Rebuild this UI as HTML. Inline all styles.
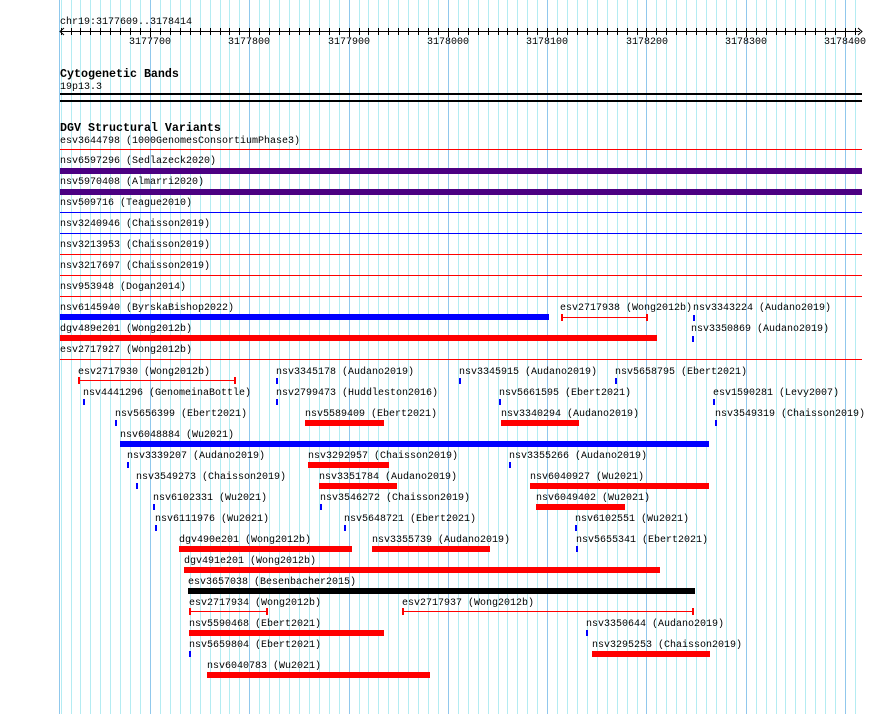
<!DOCTYPE html>
<html><head><meta charset="utf-8"><style>
body{margin:0;width:890px;height:714px;background:#fff;position:relative;overflow:hidden;font-family:"Liberation Mono",monospace;font-size:10px;color:#000}
.g{position:absolute;top:0;height:714px;width:1px;background:#b4ecf2}
.G{background:#90c8ec}
.t{position:absolute;white-space:pre;line-height:12px;height:12px;transform:translateY(2px)}
.b{position:absolute;font-weight:bold;font-size:11.67px;white-space:pre;line-height:14px;transform:translateY(1px)}
.h{position:absolute;left:60px;width:802px;height:1px}
.bar{position:absolute;height:6px}
.tk{position:absolute;width:2px;height:6px;background:#00f}
.rg{position:absolute;height:1px;background:#f00}
.rg:before,.rg:after{content:"";position:absolute;top:-3px;width:2px;height:7px;background:#f00}
.rg:before{left:0}.rg:after{right:0}
</style></head><body>
<div id="grid"></div>
<div class="t" style="left:60px;top:15px">chr19:3177609..3178414</div>
<div style="position:absolute;left:61px;top:31px;width:799px;height:1px;background:#000"></div>
<div id="ticks"></div>
<svg style="position:absolute;left:58px;top:27px" width="8" height="9"><path d="M6 1 L2 4.5 L6 8" stroke="#000" fill="none"/></svg>
<svg style="position:absolute;left:856px;top:27px" width="8" height="9"><path d="M2 1 L6 4.5 L2 8" stroke="#000" fill="none"/></svg>
<div class="t" style="left:129px;top:35px">3177700</div>
<div class="t" style="left:228px;top:35px">3177800</div>
<div class="t" style="left:328px;top:35px">3177900</div>
<div class="t" style="left:427px;top:35px">3178000</div>
<div class="t" style="left:526px;top:35px">3178100</div>
<div class="t" style="left:626px;top:35px">3178200</div>
<div class="t" style="left:725px;top:35px">3178300</div>
<div class="t" style="left:824px;top:35px">3178400</div>

<div class="b" style="left:60px;top:66px">Cytogenetic Bands</div>
<div class="t" style="left:60px;top:80px">19p13.3</div>
<div class="h" style="top:93px;background:#000;height:1.5px"></div>
<div class="h" style="top:100px;background:#000;height:1.5px"></div>

<div class="b" style="left:60px;top:120px">DGV Structural Variants</div>
<div class="t" style="left:60px;top:134px">esv3644798 (1000GenomesConsortiumPhase3)</div>
<div class="h" style="top:149px;background:#f00"></div>
<div class="t" style="left:60px;top:154px">nsv6597296 (Sedlazeck2020)</div>
<div class="bar" style="left:60px;top:168px;width:802px;background:#4b0082"></div>
<div class="t" style="left:60px;top:175px">nsv5970408 (Almarri2020)</div>
<div class="bar" style="left:60px;top:189px;width:802px;background:#4b0082"></div>
<div class="t" style="left:60px;top:196px">nsv509716 (Teague2010)</div>
<div class="h" style="top:212px;background:#00f"></div>
<div class="t" style="left:60px;top:217px">nsv3240946 (Chaisson2019)</div>
<div class="h" style="top:233px;background:#00f"></div>
<div class="t" style="left:60px;top:238px">nsv3213953 (Chaisson2019)</div>
<div class="h" style="top:254px;background:#f00"></div>
<div class="t" style="left:60px;top:259px">nsv3217697 (Chaisson2019)</div>
<div class="h" style="top:275px;background:#f00"></div>
<div class="t" style="left:60px;top:280px">nsv953948 (Dogan2014)</div>
<div class="h" style="top:296px;background:#f00"></div>
<div class="t" style="left:60px;top:301px">nsv6145940 (ByrskaBishop2022)</div>
<div class="bar" style="left:60px;top:314px;width:489px;background:#00f"></div>
<div class="t" style="left:560px;top:301px">esv2717938 (Wong2012b)</div>
<div class="rg" style="left:561px;top:317px;width:87px"></div>
<div class="t" style="left:693px;top:301px">nsv3343224 (Audano2019)</div>
<div class="tk" style="left:693px;top:315px"></div>
<div class="t" style="left:60px;top:322px">dgv489e201 (Wong2012b)</div>
<div class="bar" style="left:60px;top:335px;width:597px;background:#f00"></div>
<div class="t" style="left:691px;top:322px">nsv3350869 (Audano2019)</div>
<div class="tk" style="left:692px;top:336px"></div>
<div class="t" style="left:60px;top:343px">esv2717927 (Wong2012b)</div>
<div class="h" style="top:359px;background:#f00"></div>

<div class="t" style="left:78px;top:365px">esv2717930 (Wong2012b)</div><div class="rg" style="left:78px;top:380px;width:158px"></div>
<div class="t" style="left:276px;top:365px">nsv3345178 (Audano2019)</div><div class="tk" style="left:276px;top:378px"></div>
<div class="t" style="left:459px;top:365px">nsv3345915 (Audano2019)</div><div class="tk" style="left:459px;top:378px"></div>
<div class="t" style="left:615px;top:365px">nsv5658795 (Ebert2021)</div><div class="tk" style="left:615px;top:378px"></div>

<div class="t" style="left:83px;top:386px">nsv4441296 (GenomeinaBottle)</div><div class="tk" style="left:83px;top:399px"></div>
<div class="t" style="left:276px;top:386px">nsv2799473 (Huddleston2016)</div><div class="tk" style="left:276px;top:399px"></div>
<div class="t" style="left:499px;top:386px">nsv5661595 (Ebert2021)</div><div class="tk" style="left:499px;top:399px"></div>
<div class="t" style="left:713px;top:386px">esv1590281 (Levy2007)</div><div class="tk" style="left:713px;top:399px"></div>

<div class="t" style="left:115px;top:407px">nsv5656399 (Ebert2021)</div><div class="tk" style="left:115px;top:420px"></div>
<div class="t" style="left:305px;top:407px">nsv5589409 (Ebert2021)</div><div class="bar" style="left:305px;top:420px;width:79px;background:#f00"></div>
<div class="t" style="left:501px;top:407px">nsv3340294 (Audano2019)</div><div class="bar" style="left:501px;top:420px;width:78px;background:#f00"></div>
<div class="t" style="left:715px;top:407px">nsv3549319 (Chaisson2019)</div><div class="tk" style="left:715px;top:420px"></div>

<div class="t" style="left:120px;top:428px">nsv6048884 (Wu2021)</div><div class="bar" style="left:120px;top:441px;width:589px;background:#00f"></div>

<div class="t" style="left:127px;top:449px">nsv3339207 (Audano2019)</div><div class="tk" style="left:127px;top:462px"></div>
<div class="t" style="left:308px;top:449px">nsv3292957 (Chaisson2019)</div><div class="bar" style="left:308px;top:462px;width:81px;background:#f00"></div>
<div class="t" style="left:509px;top:449px">nsv3355266 (Audano2019)</div><div class="tk" style="left:509px;top:462px"></div>

<div class="t" style="left:136px;top:470px">nsv3549273 (Chaisson2019)</div><div class="tk" style="left:136px;top:483px"></div>
<div class="t" style="left:319px;top:470px">nsv3351784 (Audano2019)</div><div class="bar" style="left:319px;top:483px;width:78px;background:#f00"></div>
<div class="t" style="left:530px;top:470px">nsv6040927 (Wu2021)</div><div class="bar" style="left:530px;top:483px;width:179px;background:#f00"></div>

<div class="t" style="left:153px;top:491px">nsv6102331 (Wu2021)</div><div class="tk" style="left:153px;top:504px"></div>
<div class="t" style="left:320px;top:491px">nsv3546272 (Chaisson2019)</div><div class="tk" style="left:320px;top:504px"></div>
<div class="t" style="left:536px;top:491px">nsv6049402 (Wu2021)</div><div class="bar" style="left:536px;top:504px;width:89px;background:#f00"></div>

<div class="t" style="left:155px;top:512px">nsv6111976 (Wu2021)</div><div class="tk" style="left:155px;top:525px"></div>
<div class="t" style="left:344px;top:512px">nsv5648721 (Ebert2021)</div><div class="tk" style="left:344px;top:525px"></div>
<div class="t" style="left:575px;top:512px">nsv6102551 (Wu2021)</div><div class="tk" style="left:575px;top:525px"></div>

<div class="t" style="left:179px;top:533px">dgv490e201 (Wong2012b)</div><div class="bar" style="left:179px;top:546px;width:173px;background:#f00"></div>
<div class="t" style="left:372px;top:533px">nsv3355739 (Audano2019)</div><div class="bar" style="left:372px;top:546px;width:118px;background:#f00"></div>
<div class="t" style="left:576px;top:533px">nsv5655341 (Ebert2021)</div><div class="tk" style="left:576px;top:546px"></div>

<div class="t" style="left:184px;top:554px">dgv491e201 (Wong2012b)</div><div class="bar" style="left:184px;top:567px;width:476px;background:#f00"></div>

<div class="t" style="left:188px;top:575px">esv3657038 (Besenbacher2015)</div><div class="bar" style="left:188px;top:588px;width:507px;background:#000"></div>

<div class="t" style="left:189px;top:596px">esv2717934 (Wong2012b)</div><div class="rg" style="left:189px;top:611px;width:79px"></div>
<div class="t" style="left:402px;top:596px">esv2717937 (Wong2012b)</div><div class="rg" style="left:402px;top:611px;width:292px"></div>

<div class="t" style="left:189px;top:617px">nsv5590468 (Ebert2021)</div><div class="bar" style="left:189px;top:630px;width:195px;background:#f00"></div>
<div class="t" style="left:586px;top:617px">nsv3350644 (Audano2019)</div><div class="tk" style="left:586px;top:630px"></div>

<div class="t" style="left:189px;top:638px">nsv5659804 (Ebert2021)</div><div class="tk" style="left:189px;top:651px"></div>
<div class="t" style="left:592px;top:638px">nsv3295253 (Chaisson2019)</div><div class="bar" style="left:592px;top:651px;width:118px;background:#f00"></div>

<div class="t" style="left:207px;top:659px">nsv6040783 (Wu2021)</div><div class="bar" style="left:207px;top:672px;width:223px;background:#f00"></div>

<script>
var g=document.getElementById('grid'),tk=document.getElementById('ticks'),h='',k='';
h+='<div class="g G" style="left:59px"></div>';
for(var p=3177610;p<=3178410;p+=10){var x=Math.round(150+(p-3177700)*0.99286);
h+='<div class="g'+(p%100==0?' G':'')+'" style="left:'+x+'px"></div>';
k+='<div style="position:absolute;left:'+x+'px;top:28px;width:1px;height:'+(p%100==0?9:7)+'px;background:#000"></div>';}
g.innerHTML=h;tk.innerHTML=k;
</script>
</body></html>
